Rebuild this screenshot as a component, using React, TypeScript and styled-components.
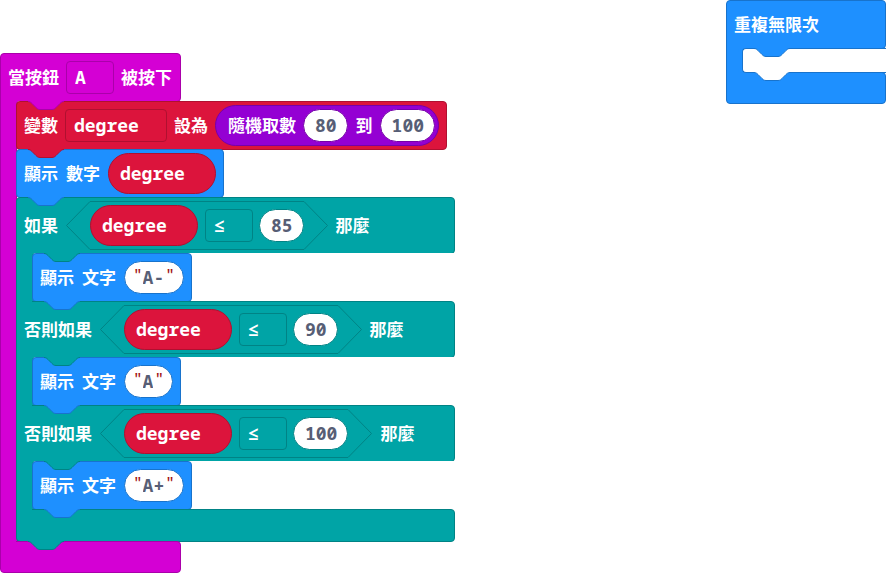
import React from 'react';
import styled, { createGlobalStyle } from 'styled-components';

const GlobalStyle = createGlobalStyle`
  *, *::before, *::after { box-sizing: border-box; }
  body { margin: 0; background: #fff; }
`;

type Tone = { fill: string; edge: string };

const tones = {
  input: { fill: '#d400d4', edge: '#aa00aa' },
  variable: { fill: '#dc143c', edge: '#b01030' },
  basic: { fill: '#1e90ff', edge: '#1873cc' },
  logic: { fill: '#00a4a6', edge: '#008385' },
  math: { fill: '#9400d3', edge: '#7600a9' },
};

const Workspace = styled.main`
  display: flex;
  justify-content: space-between;
  align-items: flex-start;
  overflow: hidden;
  color: #fff;
  font: 600 17px/24px 'Noto Sans CJK TC', sans-serif;
`;

const Script = styled.section<{ $top?: number }>`
  padding-top: ${(p) => p.$top ?? 0}px;
`;

const CBlock = styled.div<{ $minWidth?: number }>`
  display: flex;
  flex-direction: column;
  width: max-content;
  min-width: ${(p) => p.$minWidth ?? 0}px;
`;

const Row = styled.div<{ $tone: Tone; $tall?: boolean; $endPad?: number }>`
  position: relative;
  display: flex;
  align-items: center;
  gap: 8px;
  width: max-content;
  min-width: 100%;
  height: ${(p) => (p.$tall ? 57 : 49)}px;
  padding: 0 ${(p) => p.$endPad ?? 7}px 0 7px;
  margin-bottom: -1px;
  background: ${(p) => p.$tone.fill};
  border: 1px solid ${(p) => p.$tone.edge};
  border-radius: 4px;
  white-space: nowrap;
`;

const Label = styled.span`
  padding-bottom: 2px;
`;

const Statement = styled(Row)`
  min-width: 0;
`;

const Head = styled(Row)`
  border-bottom-left-radius: 0;
`;

const Middle = styled(Row)`
  border-top-left-radius: 0;
  border-bottom-left-radius: 0;
`;

const Foot = styled.div<{ $tone: Tone; $last?: boolean }>`
  position: relative;
  height: ${(p) => (p.$last ? 32 : 33)}px;
  margin-bottom: ${(p) => (p.$last ? 0 : -1)}px;
  background: ${(p) => p.$tone.fill};
  border: 1px solid ${(p) => p.$tone.edge};
  border-radius: 0 4px 4px 4px;
`;

const Slot = styled.div<{ $tone: Tone }>`
  position: relative;
  display: flex;
  width: 0;
  min-width: 100%;

  &::before {
    content: '';
    flex: none;
    width: 16px;
    margin-bottom: -1px;
    z-index: 1;
    background: ${(p) => p.$tone.fill};
    border-left: 1px solid ${(p) => p.$tone.edge};
  }
`;

const SlotBody = styled.div<{ $tone: Tone }>`
  position: relative;
  flex: 1;
  min-width: 0;
  box-shadow: -4px 0 0 ${(p) => p.$tone.fill};
  background: #fff;
  border-left: 1px solid ${(p) => p.$tone.edge};
  border-radius: 4px 0 0 4px;
`;

const EmptyBody = styled(SlotBody)`
  min-height: 25px;
  margin-bottom: -1px;
  z-index: 1;
  border-top: 1px solid ${(p) => p.$tone.edge};
  border-bottom: 1px solid ${(p) => p.$tone.edge};
`;

const Stack = styled.div`
  margin-left: -1px;
`;

const TabShape = styled.svg<{ $indent: number }>`
  position: absolute;
  left: ${(p) => p.$indent}px;
  bottom: -9px;
  z-index: 3;
  display: block;
`;

function Tab({ tone, indent = 11, fill }: { tone: Tone; indent?: number; fill?: string }) {
  const edge =
    'c2 0 3 1 4 2l4 4c1 1 2 2 4 2h12c2 0 3-1 4-2l4-4c1-1 2-2 4-2';
  return (
    <TabShape $indent={indent} width="36" height="9" viewBox="0 0 36 9" aria-hidden="true">
      <path d={`M0 0V.5${edge}V0Z`} fill={fill ?? tone.fill} />
      <path d={`M0 .5${edge}`} fill="none" stroke={tone.edge} />
    </TabShape>
  );
}

const mono = "'Noto Sans Mono', 'DejaVu Sans Mono', 'Noto Sans CJK TC', monospace";

const Dropdown = styled.select<{ $tone: Tone; $width: number }>`
  appearance: none;
  width: ${(p) => p.$width}px;
  height: 33px;
  padding: 0 8px 2px;
  margin: 0 -1px;
  color: #fff;
  background: ${(p) => p.$tone.fill};
  border: 1px solid ${(p) => p.$tone.edge};
  border-radius: 4px;
  font: 700 18px/24px ${mono};
`;

const Variable = styled(Dropdown)`
  height: 41px;
  padding: 0 11px 2px;
  margin: 0;
  border-radius: 21px;
`;

const Reporter = styled.div<{ $tone: Tone }>`
  display: flex;
  align-items: center;
  gap: 8px;
  height: 41px;
  padding: 0 3px 0 12px;
  margin-left: -1px;
  background: ${(p) => p.$tone.fill};
  border: 1px solid ${(p) => p.$tone.edge};
  border-radius: 21px;
`;

const NumberField = styled.input<{ $chars: number; $tone: Tone }>`
  box-sizing: content-box;
  width: ${(p) => p.$chars}ch;
  height: 29px;
  padding: 0 10px 2px 11px;
  margin: 0 0 0 -1px;
  color: #575e75;
  background: #fff;
  border: 1px solid ${(p) => p.$tone.edge};
  border-radius: 17px;
  font: 700 18px/24px ${mono};
`;

const TextPill = styled.label<{ $tone: Tone }>`
  display: flex;
  align-items: center;
  height: 33px;
  padding: 0 8px 2px;
  background: #fff;
  border: 1px solid ${(p) => p.$tone.edge};
  border-radius: 17px;
  color: #a31515;
  font: 500 16px/20px ${mono};
`;

const Quote = styled.span`
  padding-bottom: 4px;
`;

const TextInput = styled.input<{ $chars: number }>`
  width: ${(p) => p.$chars}ch;
  padding: 0;
  margin: 0 1px 0 0;
  color: #575e75;
  background: none;
  border: 0;
  font: 700 18px/24px ${mono};
`;

const Hexagon = styled.div`
  display: flex;
  align-items: center;
`;

const HexBody = styled.div<{ $tone: Tone }>`
  display: flex;
  align-items: center;
  gap: 8px;
  height: 49px;
  border: solid ${(p) => p.$tone.edge};
  border-width: 1px 0;
`;

const HexCap = styled.svg`
  flex: none;
  display: block;
`;

function Choice({ tone, value, width, label }: { tone: Tone; value: string; width: number; label: string }) {
  return (
    <Dropdown $tone={tone} $width={width} aria-label={label} defaultValue={value}>
      <option>{value}</option>
    </Dropdown>
  );
}

function DegreeVariable() {
  return (
    <Variable $tone={tones.variable} $width={108} aria-label="變數" defaultValue="degree">
      <option>degree</option>
    </Variable>
  );
}

function NumberValue({ value, tone, label }: { value: string; tone: Tone; label: string }) {
  return (
    <NumberField
      type="text"
      inputMode="numeric"
      aria-label={label}
      defaultValue={value}
      $chars={value.length}
      $tone={tone}
    />
  );
}

function Condition({ limit }: { limit: string }) {
  const tone = tones.logic;
  return (
    <Hexagon>
      <HexCap width="24" height="49" viewBox="0 0 24 49" aria-hidden="true">
        <path d="M24 .5L.5 24.5L24 48.5" fill="none" stroke={tone.edge} />
      </HexCap>
      <HexBody $tone={tone}>
        <DegreeVariable />
        <Choice tone={tone} value="≤" width={48} label="比較" />
        <NumberValue value={limit} tone={tone} label="數值" />
      </HexBody>
      <HexCap width="24" height="49" viewBox="0 0 24 49" aria-hidden="true">
        <path d="M0 .5L23.5 24.5L0 48.5" fill="none" stroke={tone.edge} />
      </HexCap>
    </Hexagon>
  );
}

function ShowText({ text }: { text: string }) {
  return (
    <Statement $tone={tones.basic}>
      <Label>顯示</Label>
      <Label>文字</Label>
      <TextPill $tone={tones.basic}>
        <Quote>"</Quote>
        <TextInput type="text" aria-label="文字" defaultValue={text} $chars={text.length} />
        <Quote>"</Quote>
      </TextPill>
      <Tab tone={tones.basic} />
    </Statement>
  );
}

const branches = [
  { word: '如果', limit: '85', text: 'A-' },
  { word: '否則如果', limit: '90', text: 'A' },
  { word: '否則如果', limit: '100', text: 'A+' },
];

function IfBlock() {
  const tone = tones.logic;
  return (
    <CBlock>
      {branches.map(({ word, limit, text }, i) => {
        const Arm = i === 0 ? Head : Middle;
        return (
          <React.Fragment key={limit}>
            <Arm $tone={tone} $tall $endPad={40}>
              <Label>{word}</Label>
              <Condition limit={limit} />
              <Label>那麼</Label>
              <Tab tone={tone} indent={27} />
            </Arm>
            <Slot $tone={tone}>
              <SlotBody $tone={tone}>
                <Stack>
                  <ShowText text={text} />
                </Stack>
              </SlotBody>
            </Slot>
          </React.Fragment>
        );
      })}
      <Foot $tone={tone}>
        <Tab tone={tone} />
      </Foot>
    </CBlock>
  );
}

function ButtonBlock() {
  const tone = tones.input;
  return (
    <CBlock>
      <Head $tone={tone} $endPad={8}>
        <Label>當按鈕</Label>
        <Choice tone={tone} value="A" width={48} label="按鈕" />
        <Label>被按下</Label>
        <Tab tone={tone} indent={27} />
      </Head>
      <Slot $tone={tone}>
        <SlotBody $tone={tone}>
          <Stack>
            <Statement $tone={tones.variable}>
              <Label>變數</Label>
              <Choice tone={tones.variable} value="degree" width={102} label="變數名稱" />
              <Label>設為</Label>
              <Reporter $tone={tones.math}>
                <Label>隨機取數</Label>
                <NumberValue value="80" tone={tones.math} label="最小值" />
                <Label>到</Label>
                <NumberValue value="100" tone={tones.math} label="最大值" />
              </Reporter>
              <Tab tone={tones.variable} />
            </Statement>
            <Statement $tone={tones.basic}>
              <Label>顯示</Label>
              <Label>數字</Label>
              <DegreeVariable />
              <Tab tone={tones.basic} />
            </Statement>
            <IfBlock />
          </Stack>
        </SlotBody>
      </Slot>
      <Foot $tone={tone} $last />
    </CBlock>
  );
}

function ForeverBlock() {
  const tone = tones.basic;
  return (
    <CBlock $minWidth={160}>
      <Head $tone={tone}>
        <Label>重複無限次</Label>
        <Tab tone={tone} indent={27} />
      </Head>
      <Slot $tone={tone}>
        <EmptyBody $tone={tone}>
          <Tab tone={tone} fill="#fff" />
        </EmptyBody>
      </Slot>
      <Foot $tone={tone} $last />
    </CBlock>
  );
}

export default function App() {
  return (
    <>
      <GlobalStyle />
      <Workspace>
        <Script $top={53}>
          <ButtonBlock />
        </Script>
        <Script>
          <ForeverBlock />
        </Script>
      </Workspace>
    </>
  );
}
